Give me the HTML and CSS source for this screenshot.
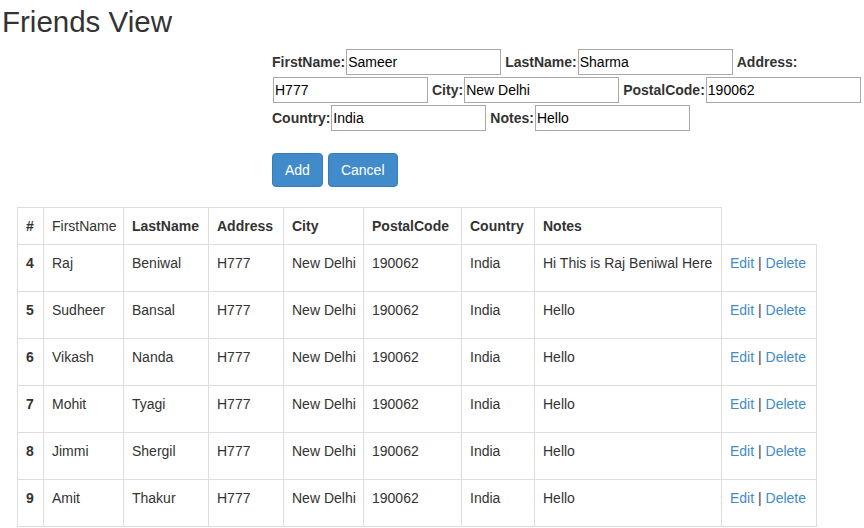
FILE: index.html
```html
<!DOCTYPE html>
<html>
<head>
<meta charset="utf-8">
<link rel="stylesheet" href="styles.css">
</head>
<body>
<h2 class="title">Friends View</h2>
<div class="form">
  <div class="fields">
    <label class="lbl">FirstName:</label><input class="inp" value="Sameer">
    <label class="lbl">LastName:</label><input class="inp" value="Sharma">
    <label class="lbl">Address:</label><input class="inp" value="H777">
    <label class="lbl">City:</label><input class="inp" value="New Delhi">
    <label class="lbl">PostalCode:</label><input class="inp" value="190062">
    <label class="lbl">Country:</label><input class="inp" value="India">
    <label class="lbl">Notes:</label><input class="inp" value="Hello">
  </div>
  <div class="buttons">
    <button class="btn">Add</button>
    <button class="btn">Cancel</button>
  </div>
</div>
<table class="grid">
  <thead>
    <tr>
      <th class="c-id">#</th>
      <td class="c-fn">FirstName</td>
      <th class="c-ln">LastName</th>
      <th class="c-ad">Address</th>
      <th class="c-ci">City</th>
      <th class="c-pc">PostalCode</th>
      <th class="c-co">Country</th>
      <th class="c-no">Notes</th>
    </tr>
  </thead>
  <tbody>
    <tr><th>4</th><td>Raj</td><td>Beniwal</td><td>H777</td><td>New Delhi</td><td>190062</td><td>India</td><td>Hi This is Raj Beniwal Here</td><td class="c-act"><a href="#">Edit</a> <span class="sep">|</span> <a href="#">Delete</a></td></tr>
    <tr><th>5</th><td>Sudheer</td><td>Bansal</td><td>H777</td><td>New Delhi</td><td>190062</td><td>India</td><td>Hello</td><td class="c-act"><a href="#">Edit</a> <span class="sep">|</span> <a href="#">Delete</a></td></tr>
    <tr><th>6</th><td>Vikash</td><td>Nanda</td><td>H777</td><td>New Delhi</td><td>190062</td><td>India</td><td>Hello</td><td class="c-act"><a href="#">Edit</a> <span class="sep">|</span> <a href="#">Delete</a></td></tr>
    <tr><th>7</th><td>Mohit</td><td>Tyagi</td><td>H777</td><td>New Delhi</td><td>190062</td><td>India</td><td>Hello</td><td class="c-act"><a href="#">Edit</a> <span class="sep">|</span> <a href="#">Delete</a></td></tr>
    <tr><th>8</th><td>Jimmi</td><td>Shergil</td><td>H777</td><td>New Delhi</td><td>190062</td><td>India</td><td>Hello</td><td class="c-act"><a href="#">Edit</a> <span class="sep">|</span> <a href="#">Delete</a></td></tr>
    <tr><th>9</th><td>Amit</td><td>Thakur</td><td>H777</td><td>New Delhi</td><td>190062</td><td>India</td><td>Hello</td><td class="c-act"><a href="#">Edit</a> <span class="sep">|</span> <a href="#">Delete</a></td></tr>
  </tbody>
</table>
</body>
</html>
```
FILE: styles.css
```css
html, body {
  margin: 0;
  padding: 0;
  background: #fff;
}
body {
  font-family: "Liberation Sans", Arial, sans-serif;
  font-size: 14px;
  line-height: 20px;
  color: #333;
  overflow: hidden;
}
.title {
  margin: 6px 0 0 2px;
  font-size: 29.5px;
  line-height: 31px;
  font-weight: 500;
  color: #333;
}
.form {
  margin: 12px 0 0 272px;
}
.fields {
  display: flex;
  flex-wrap: wrap;
  align-items: center;
  row-gap: 2px;
  width: 600px;
}
.lbl {
  font-weight: bold;
  color: #333;
}
.inp {
  box-sizing: border-box;
  width: 155px;
  height: 26px;
  margin: 0 4px 0 1px;
  padding: 1px 1px;
  border: 1px solid #a9a9a9;
  font-family: "Liberation Sans", Arial, sans-serif;
  font-size: 14px;
  color: #000;
  background: #fff;
}
.inp:last-child {
  margin-right: 0;
}
.buttons {
  display: flex;
  gap: 5px;
  margin-top: 22px;
}
.btn {
  box-sizing: border-box;
  height: 34px;
  padding: 6px 12px;
  border: 1px solid #357ebd;
  border-radius: 4px;
  background: #428bca;
  color: #fff;
  font-family: "Liberation Sans", Arial, sans-serif;
  font-size: 14px;
  line-height: 20px;
}
.grid {
  margin: 20px 0 0 17px;
  border-collapse: collapse;
  table-layout: fixed;
  width: 800px;
}
.grid th, .grid td {
  padding: 8px;
  border: 1px solid #ddd;
  text-align: left;
  vertical-align: top;
  white-space: nowrap;
  line-height: 20px;
  overflow: hidden;
}
.grid th {
  font-weight: bold;
}
.grid tbody td, .grid tbody th {
  height: 30px;
}
.c-id { width: 9px; }
.c-fn { width: 63px; }
.c-ln { width: 68px; }
.c-ad { width: 58px; }
.c-ci { width: 63px; }
.c-pc { width: 81px; }
.c-co { width: 56px; }
.c-no { width: 170px; }
.c-act a {
  color: #428bca;
  text-decoration: none;
}
.sep {
  color: #4a3550;
}
```
